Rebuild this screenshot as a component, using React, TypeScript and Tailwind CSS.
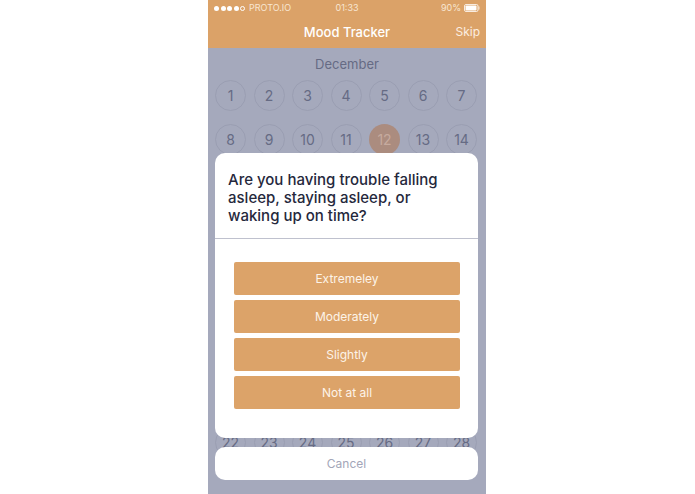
const rows = [
  [1, 2, 3, 4, 5, 6, 7],
  [8, 9, 10, 11, 12, 13, 14],
]
const lastRow = [22, 23, 24, 25, 26, 27, 28]
const answers = ['Extremeley', 'Moderately', 'Slightly', 'Not at all']

function Day({ n }: { n: number }) {
  if (n === 12) {
    return (
      <div className="flex h-[31px] w-[31px] items-center justify-center rounded-full bg-[#ab8c7f] text-[14px] text-[#c6aa9e]">
        {n}
      </div>
    )
  }
  return (
    <div className="flex h-[31px] w-[31px] items-center justify-center rounded-full border border-[#9a9eb2] text-[14px] text-[#666b84]">
      {n}
    </div>
  )
}

function Week({ days }: { days: number[] }) {
  return (
    <div className="flex justify-between">
      {days.map((d) => (
        <Day key={d} n={d} />
      ))}
    </div>
  )
}

function StatusBar() {
  return (
    <div className="grid h-[14px] grid-cols-3 items-center px-[6px] text-[9px] text-[#f8e6d2]">
      <div className="flex items-center gap-[1.5px]">
        <span className="h-[5px] w-[5px] rounded-full bg-white" />
        <span className="h-[5px] w-[5px] rounded-full bg-white" />
        <span className="h-[5px] w-[5px] rounded-full bg-white" />
        <span className="h-[5px] w-[5px] rounded-full bg-white" />
        <span className="h-[5px] w-[5px] rounded-full border border-white" />
        <span className="ml-[2.5px] whitespace-nowrap">PROTO.IO</span>
      </div>
      <div className="text-center">01:33</div>
      <div className="flex items-center justify-end gap-[3px]">
        <span>90%</span>
        <svg width="16" height="8" viewBox="0 0 16 8">
          <rect x="0.5" y="0.5" width="13.5" height="7" rx="1.5" fill="none" stroke="#fff" strokeOpacity="0.8" />
          <rect x="1.5" y="1.5" width="11" height="5" rx="0.8" fill="#fff" />
          <rect x="14.5" y="2.5" width="1" height="3" fill="#fff" fillOpacity="0.7" />
        </svg>
      </div>
    </div>
  )
}

export default function App() {
  return (
    <div className="h-[494px] w-[695px] overflow-hidden bg-white font-['Inter',sans-serif]">
      <div className="relative ml-[208px] h-[494px] w-[278px] overflow-hidden bg-[#a5a9bc]">
        <header className="h-[48px] bg-[#dba268] pt-[1px]">
          <StatusBar />
          <div className="relative mt-[9px] text-center text-[13px] leading-[16px] font-medium text-white">
            Mood Tracker
            <span className="absolute top-0 right-[6px] text-[12px] font-normal text-[#fbeee0]">Skip</span>
          </div>
        </header>

        <div className="pt-[8px] text-center text-[13px] leading-[16px] text-[#666b84]">December</div>
        <div className="flex flex-col gap-[13px] pt-[7.5px] pr-[9px] pl-[7px]">
          {rows.map((r) => (
            <Week key={r[0]} days={r} />
          ))}
          <div className="mt-[259.5px]">
            <Week days={lastRow} />
          </div>
        </div>

        <div className="absolute inset-0 flex flex-col gap-[9px] pt-[153px] pr-[8px] pl-[7px]">
          <div className="h-[285px] rounded-[10px] bg-white">
            <div className="h-[85.5px] border-b-[1.5px] border-[#bfc1ce] px-[13px] pt-[18px] text-[15px] leading-[18px] font-medium text-[#25283c]">
              Are you having trouble falling asleep, staying asleep, or waking up on time?
            </div>
            <div className="flex flex-col gap-[5px] pt-[23px] pr-[18px] pl-[19px]">
              {answers.map((a) => (
                <div
                  key={a}
                  className="flex h-[33px] items-center justify-center rounded-[2px] bg-[#dca369] pt-[1px] text-[12px] text-[#fdf3e8]"
                >
                  {a}
                </div>
              ))}
            </div>
          </div>
          <div className="flex h-[33px] items-center justify-center rounded-[10px] bg-white text-[12px] text-[#a3a6b8]">
            Cancel
          </div>
        </div>
      </div>
    </div>
  )
}
